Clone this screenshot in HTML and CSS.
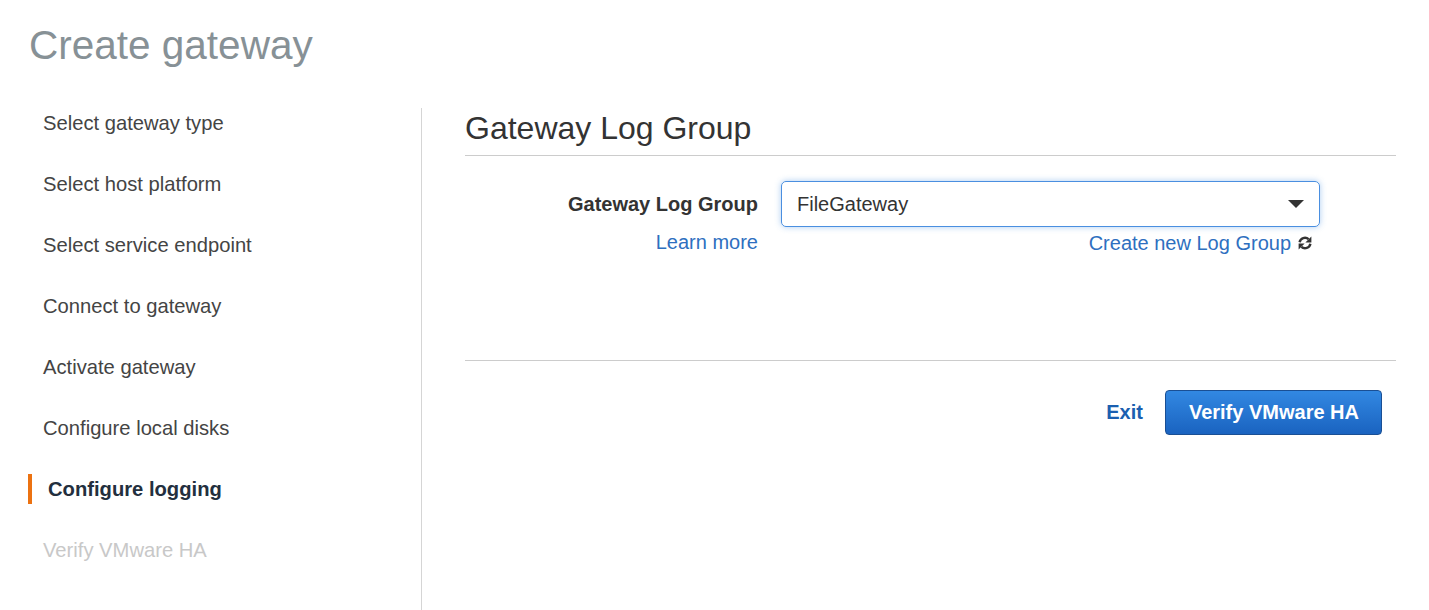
FILE: index.html
```html
<!DOCTYPE html>
<html lang="en">
<head>
    <meta charset="UTF-8">
    <meta name="viewport" content="width=device-width, initial-scale=1.0">
    <title>Create gateway</title>
    <link rel="stylesheet" href="styles.css">
</head>
<body>
    <h1 class="page-title">Create gateway</h1>

    <div class="wizard">
        <!-- Wizard steps -->
        <nav class="steps">
            <ul>
                <li>Select gateway type</li>
                <li>Select host platform</li>
                <li>Select service endpoint</li>
                <li>Connect to gateway</li>
                <li>Activate gateway</li>
                <li>Configure local disks</li>
                <li class="active">Configure logging</li>
                <li class="disabled">Verify VMware HA</li>
            </ul>
        </nav>

        <!-- Step content -->
        <main class="panel">
            <h2 class="panel-title">Gateway Log Group</h2>

            <div class="field-row">
                <div class="field-label">
                    <label for="log-group">Gateway Log Group</label>
                    <a href="#" class="link">Learn more</a>
                </div>
                <div class="field-control">
                    <div class="select" id="log-group">
                        <span>FileGateway</span>
                        <span class="caret"></span>
                    </div>
                    <div class="control-links">
                        <a href="#" class="link">Create new Log Group</a>
                        <svg class="refresh" viewBox="0 0 16 16" width="16" height="16">
                            <path d="M2.6 7.2A5.4 5.4 0 0 1 11.6 4.2" fill="none" stroke="#333" stroke-width="2.4"/>
                            <polygon points="14.4,1.4 14.4,7.4 8.4,7.4" fill="#333"/>
                            <path d="M13.4 8.8A5.4 5.4 0 0 1 4.4 11.8" fill="none" stroke="#333" stroke-width="2.4"/>
                            <polygon points="1.6,14.6 1.6,8.6 7.6,8.6" fill="#333"/>
                        </svg>
                    </div>
                </div>
            </div>

            <div class="actions">
                <a href="#" class="exit">Exit</a>
                <button class="primary">Verify VMware HA</button>
            </div>
        </main>
    </div>
</body>
</html>
```

FILE: styles.css
```css
* {
    box-sizing: border-box;
    margin: 0;
    padding: 0;
}

body {
    font-family: "Liberation Sans", Arial, sans-serif;
    background-color: #fff;
    color: #333;
}

.page-title {
    font-size: 40.5px;
    font-weight: normal;
    line-height: 48px;
    color: #879196;
    margin: 21px 0 39px 29px;
}

.wizard {
    display: flex;
    min-height: 502px;
}

.steps {
    width: 422px;
    flex-shrink: 0;
    border-right: 1px solid #d5d5d5;
}

.steps ul {
    list-style: none;
    display: flex;
    flex-direction: column;
    gap: 31px;
}

.steps li {
    font-size: 20.2px;
    line-height: 30px;
    color: #444;
    padding-left: 43px;
}

.steps li.active {
    font-weight: bold;
    color: #232f3e;
    margin-left: 28px;
    padding-left: 16px;
    border-left: 4px solid #ec7211;
}

.steps li.disabled {
    color: #c8c8c8;
}

.panel {
    flex: 1;
    padding: 0 33px 0 43px;
}

.panel-title {
    font-size: 32px;
    font-weight: normal;
    line-height: 40px;
    color: #333;
    padding-bottom: 7px;
    border-bottom: 1px solid #ccc;
}

.field-row {
    display: flex;
    gap: 23px;
    margin-top: 25px;
}

.field-label {
    width: 293px;
    display: flex;
    flex-direction: column;
    align-items: flex-end;
}

.field-label label {
    font-size: 20px;
    font-weight: bold;
    line-height: 46px;
    color: #333;
}

.link {
    font-size: 20px;
    line-height: 30px;
    color: #2e6fc0;
    text-decoration: none;
}

.field-control {
    width: 539px;
}

.select {
    height: 46px;
    display: flex;
    align-items: center;
    justify-content: space-between;
    padding: 0 15px;
    font-size: 20px;
    color: #333;
    border: 1px solid #4a8fe0;
    border-radius: 5px;
    box-shadow: 0 0 6px rgba(74, 143, 224, 0.45);
}

.caret {
    width: 0;
    height: 0;
    border-left: 8px solid transparent;
    border-right: 8px solid transparent;
    border-top: 8px solid #333;
}

.control-links {
    display: flex;
    justify-content: flex-end;
    align-items: center;
    gap: 6px;
    padding-right: 7px;
    margin-top: 1px;
}

.refresh {
    display: block;
}

.actions {
    margin-top: 102px;
    border-top: 1px solid #ccc;
    padding: 29px 14px 0 0;
    display: flex;
    justify-content: flex-end;
    align-items: center;
    gap: 22px;
}

.exit {
    font-size: 20px;
    font-weight: bold;
    color: #1b5fb0;
    text-decoration: none;
}

.primary {
    height: 45px;
    padding: 0 22px 0 23px;
    font-family: inherit;
    font-size: 20px;
    font-weight: bold;
    color: #fff;
    background: linear-gradient(#3288e2, #1a63c0);
    border: 1px solid #1a4f94;
    border-radius: 4px;
    cursor: pointer;
}

.primary:hover {
    background: #1a63c0;
}
```
